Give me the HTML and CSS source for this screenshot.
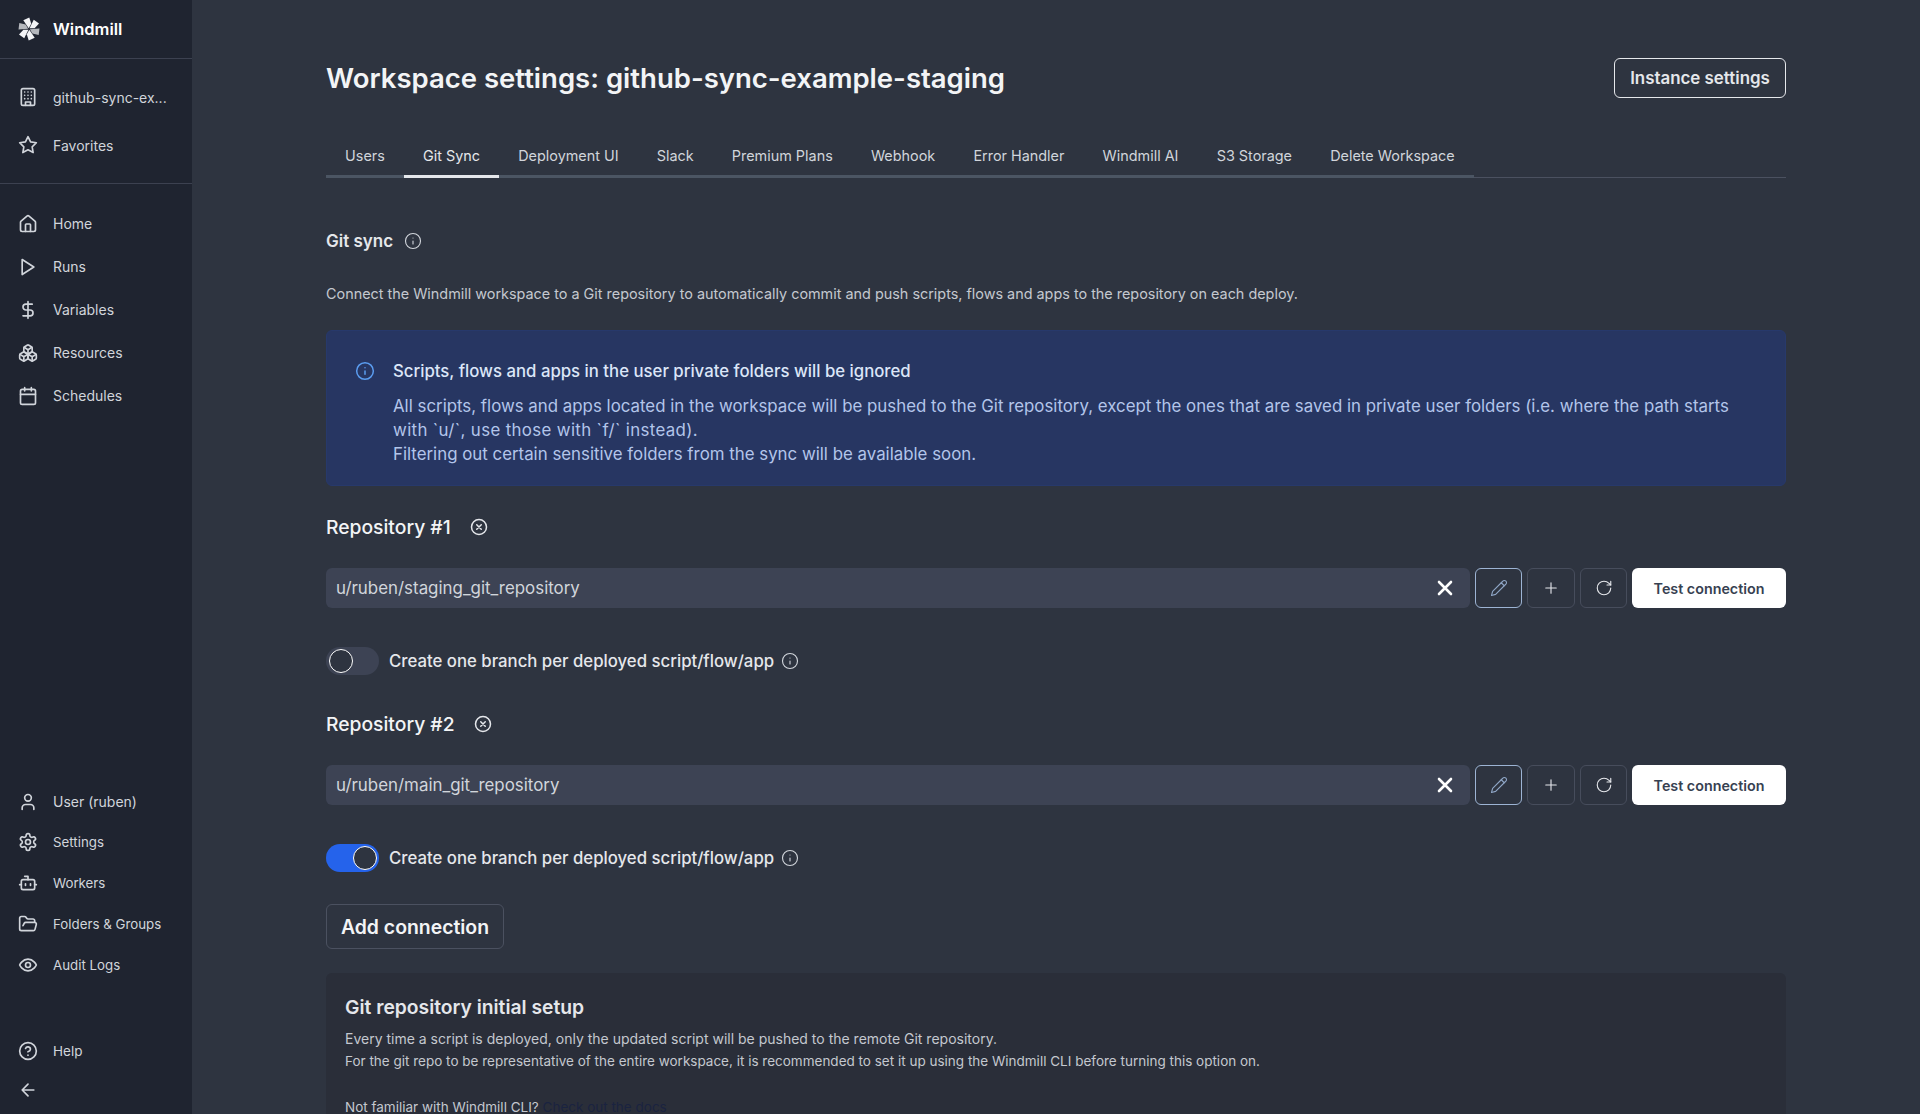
FILE: index.html
```html
<!DOCTYPE html>
<html lang="en">
  <head>
    <meta charset="UTF-8" />
    <meta name="viewport" content="width=device-width, initial-scale=1.0" />
    <title>Workspace settings</title>
    <link rel="stylesheet" href="styles.css">
  </head>
  <body>
    <svg class="sprites" width="0" height="0">
      <symbol id="i-blade" viewBox="0 0 24 24"><path d="M11.700 11.200 6.300 3.200 12.300.6 14.200 6.800z"/></symbol>
      <symbol id="i-building" viewBox="0 0 24 24"><rect x="4" y="2" width="16" height="20" rx="2"/><path d="M9 22v-4h6v4M8 6h.01M16 6h.01M12 6h.01M12 10h.01M12 14h.01M16 10h.01M16 14h.01M8 10h.01M8 14h.01"/></symbol>
      <symbol id="i-star" viewBox="0 0 24 24"><polygon points="12 2 15.09 8.26 22 9.27 17 14.14 18.18 21.02 12 17.77 5.82 21.02 7 14.14 2 9.27 8.91 8.26 12 2"/></symbol>
      <symbol id="i-home" viewBox="0 0 24 24"><path d="M15 21v-8a1 1 0 0 0-1-1h-4a1 1 0 0 0-1 1v8"/><path d="M3 10a2 2 0 0 1 .709-1.528l7-5.999a2 2 0 0 1 2.582 0l7 5.999A2 2 0 0 1 21 10v9a2 2 0 0 1-2 2H5a2 2 0 0 1-2-2z"/></symbol>
      <symbol id="i-play" viewBox="0 0 24 24"><polygon points="5 3 19 12 5 21 5 3"/></symbol>
      <symbol id="i-dollar" viewBox="0 0 24 24"><path d="M12 2v20M17 5H9.500a3.500 3.500 0 0 0 0 7h5a3.500 3.500 0 0 1 0 7H6"/></symbol>
      <symbol id="i-boxes" viewBox="0 0 24 24"><path d="M2.970 12.920A2 2 0 0 0 2 14.630v3.240a2 2 0 0 0 .97 1.710l3 1.800a2 2 0 0 0 2.060 0L12 19v-5.500l-5-3-4.030 2.420Z"/><path d="m7 16.500-4.740-2.850M7 16.500l5-3M7 16.500v5.170"/><path d="M12 13.500V19l3.970 2.380a2 2 0 0 0 2.060 0l3-1.800a2 2 0 0 0 .97-1.710v-3.240a2 2 0 0 0-.97-1.710L17 10.500l-5 3Z"/><path d="m17 16.500-5-3M17 16.500l4.740-2.850M17 16.500v5.170"/><path d="M7.970 4.420A2 2 0 0 0 7 6.130v4.370l5 3 5-3V6.130a2 2 0 0 0-.97-1.710l-3-1.800a2 2 0 0 0-2.060 0l-3 1.800Z"/><path d="M12 8 7.260 5.150M12 8l4.740-2.850M12 13.500V8"/></symbol>
      <symbol id="i-calendar" viewBox="0 0 24 24"><rect x="3" y="4" width="18" height="18" rx="2"/><path d="M16 2v4M8 2v4M3 10h18"/></symbol>
      <symbol id="i-user" viewBox="0 0 24 24"><path d="M19 21v-2a4 4 0 0 0-4-4H9a4 4 0 0 0-4 4v2"/><circle cx="12" cy="7" r="4"/></symbol>
      <symbol id="i-settings" viewBox="0 0 24 24"><path d="M12.220 2h-.44a2 2 0 0 0-2 2v.18a2 2 0 0 1-1 1.730l-.43.25a2 2 0 0 1-2 0l-.15-.08a2 2 0 0 0-2.730.73l-.22.38a2 2 0 0 0 .73 2.730l.15.1a2 2 0 0 1 1 1.720v.51a2 2 0 0 1-1 1.740l-.15.09a2 2 0 0 0-.73 2.730l.22.38a2 2 0 0 0 2.730.73l.15-.08a2 2 0 0 1 2 0l.43.25a2 2 0 0 1 1 1.730V20a2 2 0 0 0 2 2h.44a2 2 0 0 0 2-2v-.18a2 2 0 0 1 1-1.730l.43-.25a2 2 0 0 1 2 0l.15.08a2 2 0 0 0 2.730-.73l.22-.39a2 2 0 0 0-.73-2.730l-.15-.08a2 2 0 0 1-1-1.740v-.5a2 2 0 0 1 1-1.740l.15-.09a2 2 0 0 0 .73-2.730l-.22-.38a2 2 0 0 0-2.730-.73l-.15.08a2 2 0 0 1-2 0l-.43-.25a2 2 0 0 1-1-1.730V4a2 2 0 0 0-2-2z"/><circle cx="12" cy="12" r="3"/></symbol>
      <symbol id="i-bot" viewBox="0 0 24 24"><path d="M12 8V4H8"/><rect x="4" y="8" width="16" height="12" rx="2"/><path d="M2 14h2M20 14h2M15 13v2M9 13v2"/></symbol>
      <symbol id="i-folder" viewBox="0 0 24 24"><path d="m6 14 1.500-2.900A2 2 0 0 1 9.240 10H20a2 2 0 0 1 1.940 2.500l-1.540 6a2 2 0 0 1-1.950 1.500H4a2 2 0 0 1-2-2V5a2 2 0 0 1 2-2h3.900a2 2 0 0 1 1.690.9l.81 1.200a2 2 0 0 0 1.670.9H18a2 2 0 0 1 2 2v2"/></symbol>
      <symbol id="i-eye" viewBox="0 0 24 24"><path d="M2 12s3-7 10-7 10 7 10 7-3 7-10 7-10-7-10-7Z"/><circle cx="12" cy="12" r="3"/></symbol>
      <symbol id="i-help" viewBox="0 0 24 24"><circle cx="12" cy="12" r="10"/><path d="M9.090 9a3 3 0 0 1 5.830 1c0 2-3 3-3 3M12 17h.01"/></symbol>
      <symbol id="i-back" viewBox="0 0 24 24"><path d="m12 19-7-7 7-7M19 12H5"/></symbol>
      <symbol id="i-info" viewBox="0 0 24 24"><circle cx="12" cy="12" r="10"/><path d="M12 16v-4M12 8h.01"/></symbol>
      <symbol id="i-xcircle" viewBox="0 0 24 24"><circle cx="12" cy="12" r="10"/><path d="m15 9-6 6M9 9l6 6"/></symbol>
      <symbol id="i-x" viewBox="0 0 24 24"><path d="M18 6 6 18M6 6l12 12"/></symbol>
      <symbol id="i-pen" viewBox="0 0 24 24"><path d="M17 3a2.850 2.830 0 1 1 4 4L7.500 20.500 2 22l1.500-5.500Z"/><path d="m15 5 4 4"/></symbol>
      <symbol id="i-plus" viewBox="0 0 24 24"><path d="M5 12h14M12 5v14"/></symbol>
      <symbol id="i-refresh" viewBox="0 0 24 24"><path d="M21 12a9 9 0 1 1-9-9c2.520 0 4.930 1 6.740 2.740L21 8"/><path d="M21 3v5h-5"/></symbol>
    </svg>

    <aside class="sidebar">
      <div class="brand">
        <svg class="logo" viewBox="0 0 24 24">
          <use class="blade-light" href="#i-blade" width="24" height="24"/>
          <use class="blade-light" href="#i-blade" width="24" height="24" transform="rotate(60 12 12)"/>
          <use class="blade-grey" href="#i-blade" width="24" height="24" transform="rotate(120 12 12)"/>
          <use class="blade-light" href="#i-blade" width="24" height="24" transform="rotate(180 12 12)"/>
          <use class="blade-light" href="#i-blade" width="24" height="24" transform="rotate(240 12 12)"/>
          <use class="blade-grey" href="#i-blade" width="24" height="24" transform="rotate(300 12 12)"/>
        </svg>
        <span>Windmill</span>
      </div>
      <nav class="nav-top">
        <a class="nav-item workspace"><svg><use href="#i-building"/></svg><span>github-sync-ex...</span></a>
        <a class="nav-item favorites"><svg><use href="#i-star"/></svg><span>Favorites</span></a>
      </nav>
      <nav class="nav-main">
        <a class="nav-item"><svg><use href="#i-home"/></svg><span>Home</span></a>
        <a class="nav-item"><svg><use href="#i-play"/></svg><span>Runs</span></a>
        <a class="nav-item"><svg><use href="#i-dollar"/></svg><span>Variables</span></a>
        <a class="nav-item"><svg><use href="#i-boxes"/></svg><span>Resources</span></a>
        <a class="nav-item"><svg><use href="#i-calendar"/></svg><span>Schedules</span></a>
      </nav>
      <nav class="nav-bottom">
        <a class="nav-item nav-user"><svg><use href="#i-user"/></svg><span>User (ruben)</span></a>
        <a class="nav-item"><svg><use href="#i-settings"/></svg><span>Settings</span></a>
        <a class="nav-item"><svg><use href="#i-bot"/></svg><span>Workers</span></a>
        <a class="nav-item"><svg><use href="#i-folder"/></svg><span>Folders &amp; Groups</span></a>
        <a class="nav-item"><svg><use href="#i-eye"/></svg><span>Audit Logs</span></a>
      </nav>
      <nav class="nav-help">
        <a class="nav-item"><svg><use href="#i-help"/></svg><span>Help</span></a>
        <a class="nav-item back"><svg><use href="#i-back"/></svg></a>
      </nav>
    </aside>

    <main class="content">
      <header class="page-head">
        <h1>Workspace settings: github-sync-example-staging</h1>
        <button type="button" class="btn-outline">Instance settings</button>
      </header>

      <div class="tabs">
        <span class="tab">Users</span>
        <span class="tab active">Git Sync</span>
        <span class="tab">Deployment UI</span>
        <span class="tab">Slack</span>
        <span class="tab">Premium Plans</span>
        <span class="tab">Webhook</span>
        <span class="tab">Error Handler</span>
        <span class="tab">Windmill AI</span>
        <span class="tab">S3 Storage</span>
        <span class="tab">Delete Workspace</span>
      </div>

      <div class="section-title">
        <h2>Git sync</h2>
        <svg class="icon-info"><use href="#i-info"/></svg>
      </div>
      <p class="desc">Connect the Windmill workspace to a Git repository to automatically commit and push scripts, flows and apps to the repository on each deploy.</p>

      <div class="alert">
        <svg class="alert-icon"><use href="#i-info"/></svg>
        <div>
          <h3>Scripts, flows and apps in the user private folders will be ignored</h3>
          <div class="alert-body">
            <p>All scripts, flows and apps located in the workspace will be pushed to the Git repository, except the ones that are saved in private user folders (i.e. where the path starts</p>
            <p class="wide">with `u/`, use those with `f/` instead).</p>
            <p>Filtering out certain sensitive folders from the sync will be available soon.</p>
          </div>
        </div>
      </div>

      <section class="repo">
        <div class="repo-title">
          <h3>Repository #1</h3>
          <svg><use href="#i-xcircle"/></svg>
        </div>
        <div class="repo-row">
          <div class="path-input">
            <span>u/ruben/staging_git_repository</span>
            <svg><use href="#i-x"/></svg>
          </div>
          <button type="button" class="btn-icon edit"><svg><use href="#i-pen"/></svg></button>
          <button type="button" class="btn-icon add"><svg><use href="#i-plus"/></svg></button>
          <button type="button" class="btn-icon"><svg><use href="#i-refresh"/></svg></button>
          <button type="button" class="btn-test">Test connection</button>
        </div>
        <div class="toggle-row">
          <span class="toggle"><span class="knob"></span></span>
          <span>Create one branch per deployed script/flow/app</span>
          <svg class="icon-info"><use href="#i-info"/></svg>
        </div>
      </section>

      <section class="repo">
        <div class="repo-title">
          <h3>Repository #2</h3>
          <svg><use href="#i-xcircle"/></svg>
        </div>
        <div class="repo-row">
          <div class="path-input">
            <span>u/ruben/main_git_repository</span>
            <svg><use href="#i-x"/></svg>
          </div>
          <button type="button" class="btn-icon edit"><svg><use href="#i-pen"/></svg></button>
          <button type="button" class="btn-icon add"><svg><use href="#i-plus"/></svg></button>
          <button type="button" class="btn-icon"><svg><use href="#i-refresh"/></svg></button>
          <button type="button" class="btn-test">Test connection</button>
        </div>
        <div class="toggle-row">
          <span class="toggle on"><span class="knob"></span></span>
          <span>Create one branch per deployed script/flow/app</span>
          <svg class="icon-info"><use href="#i-info"/></svg>
        </div>
      </section>

      <button type="button" class="btn-add">Add connection</button>

      <div class="setup">
        <h3>Git repository initial setup</h3>
        <p>Every time a script is deployed, only the updated script will be pushed to the remote Git repository.</p>
        <p class="setup-small">For the git repo to be representative of the entire workspace, it is recommended to set it up using the Windmill CLI before turning this option on.</p>
        <p class="setup-small setup-docs">Not familiar with Windmill CLI? <a>Check out the docs</a></p>
      </div>
    </main>
  </body>
</html>
```

FILE: styles.css
```css
* {
  box-sizing: border-box;
}

html,
body {
  height: 100%;
  margin: 0;
}

body {
  display: flex;
  overflow: hidden;
  background-color: #2e3440;
  color: #f3f4f6;
  font-family: Inter, "Liberation Sans", sans-serif;
}

.sprites {
  position: absolute;
}

svg {
  fill: none;
  stroke: currentColor;
  stroke-width: 2;
  stroke-linecap: round;
  stroke-linejoin: round;
}

/* sidebar */
.sidebar {
  width: 192px;
  height: 100%;
  flex: none;
  display: flex;
  flex-direction: column;
  background-color: #1f2430;
  color: #d1d5db;
  font-size: 14px;
}

.brand {
  height: 59px;
  display: flex;
  align-items: center;
  gap: 12px;
  padding-left: 17px;
  border-bottom: 1px solid #3c4150;
  color: #ffffff;
  font-size: 16.500px;
  font-weight: 600;
}

.logo {
  width: 24px;
  height: 24px;
  stroke: none;
}

.blade-light {
  fill: #f3f4f6;
}

.blade-grey {
  fill: #b5b8bd;
}

.nav-top {
  height: 125px;
  padding-top: 14px;
  border-bottom: 1px solid #3c4150;
}

.nav-item {
  display: flex;
  align-items: center;
  gap: 15px;
  height: 43px;
  padding-left: 18px;
}

.nav-item svg {
  width: 20px;
  height: 20px;
  flex: none;
}

.workspace {
  height: 48px;
}

.favorites {
  height: 48px;
}

.nav-main {
  padding-top: 18px;
}

.nav-bottom {
  margin-top: auto;
  font-size: 13.300px;
}

.nav-bottom .nav-item {
  height: 41px;
}

.nav-bottom .nav-user {
  height: 39px;
  font-size: 14px;
}

.nav-help {
  padding-top: 46px;
  padding-bottom: 5px;
  font-size: 13.500px;
}

.nav-help .nav-item {
  height: 39px;
}

/* main */
.content {
  flex: 1;
  min-width: 0;
  height: 100%;
  overflow: hidden;
  padding: 58px 134px 0;
}

.page-head {
  display: flex;
  align-items: center;
  justify-content: space-between;
  height: 40px;
}

h1,
h2,
h3,
p {
  margin: 0;
}

h1 {
  font-size: 27.500px;
  font-weight: 600;
  color: #f3f4f6;
}

.btn-outline {
  width: 172px;
  height: 40px;
  background: transparent;
  border: 1px solid #e5e7eb;
  border-radius: 6px;
  color: #e5e7eb;
  font: 600 16.900px Inter, sans-serif;
}

.tabs {
  display: flex;
  margin-top: 34px;
  height: 46px;
  border-bottom: 1px solid #4b5160;
}

.tab {
  height: 46px;
  padding: 4px 19.100px 0;
  display: flex;
  align-items: center;
  font-size: 14.400px;
  color: #d1d5db;
  border-bottom: 3px solid #4b5563;
}

.tab.active {
  color: #e5e7eb;
  border-bottom-color: #e5e7eb;
}

.section-title {
  display: flex;
  align-items: center;
  gap: 11px;
  margin-top: 51px;
  height: 24px;
}

h2 {
  font-size: 17px;
  font-weight: 600;
  color: #e5e7eb;
}

.icon-info {
  width: 18px;
  height: 18px;
  stroke-width: 1.500;
  color: #d1d5db;
}

.desc {
  margin-top: 31px;
  font-size: 14.400px;
  line-height: 20px;
  color: #c4c8cf;
}

.alert {
  display: flex;
  gap: 18px;
  height: 156px;
  margin-top: 26px;
  padding: 28px;
  border: 1px solid #27396b;
  border-radius: 6px;
  background-color: #273662;
  color: #b3c5ea;
}

.alert-icon {
  width: 20px;
  height: 20px;
  flex: none;
  margin-top: 2px;
  stroke-width: 1.800;
  color: #5b9df0;
}

.alert h3 {
  font-size: 16.750px;
  line-height: 24px;
  font-weight: 500;
  color: #dce6f8;
}

.alert-body {
  margin-top: 11px;
  font-size: 16.850px;
  line-height: 24px;
}

.alert-body .wide {
  letter-spacing: 0.350px;
}

.repo {
  margin-top: 25px;
}

.repo + .repo {
  margin-top: 33px;
}

.repo-title {
  display: flex;
  align-items: center;
  gap: 19.500px;
  height: 32px;
}

.repo-title h3 {
  font-size: 19.300px;
  font-weight: 500;
  color: #f3f4f6;
}

.repo-title svg {
  width: 18px;
  height: 18px;
  color: #e5e7eb;
}

.repo-row {
  display: flex;
  gap: 5px;
  height: 40px;
  margin-top: 25px;
}

.path-input {
  flex: 1;
  display: flex;
  align-items: center;
  justify-content: space-between;
  padding: 0 13px 0 10px;
  border-radius: 6px;
  background-color: #3d4354;
  color: #d1d5db;
  font-size: 16.900px;
}

.path-input svg {
  width: 24px;
  height: 24px;
  stroke-width: 2.600;
  color: #ffffff;
}

.btn-icon {
  width: 47px;
  height: 40px;
  display: flex;
  align-items: center;
  justify-content: center;
  padding: 0;
  background: transparent;
  border: 1px solid #474d5c;
  border-radius: 6px;
  color: #e5e7eb;
}

.btn-icon.add {
  width: 48px;
}

.btn-icon svg {
  width: 18px;
  height: 18px;
  stroke-width: 1.500;
}

.btn-icon.edit {
  border-color: #9db4d4;
  color: #8fa6c6;
}

.btn-test {
  width: 154px;
  height: 40px;
  border: none;
  border-radius: 6px;
  background-color: #ffffff;
  color: #374151;
  font: 600 14.300px Inter, sans-serif;
}

.toggle-row {
  display: flex;
  align-items: center;
  height: 28px;
  margin-top: 39px;
  color: #e5e7eb;
  font-size: 16.750px;
  font-weight: 500;
}

.toggle-row .icon-info {
  margin-left: 7px;
}

.toggle {
  width: 53px;
  height: 28px;
  margin-right: 10px;
  padding: 2px 3px;
  border-radius: 14px;
  background-color: #3d4354;
  display: flex;
}

.toggle.on {
  justify-content: flex-end;
  padding-right: 2px;
  background-color: #2563eb;
}

.knob {
  width: 24px;
  height: 24px;
  border: 1px solid #ffffff;
  border-radius: 50%;
  background-color: #2e3440;
}

.btn-add {
  display: block;
  width: 178px;
  height: 45px;
  margin-top: 32px;
  background: transparent;
  border: 1px solid #4b5160;
  border-radius: 6px;
  color: #f3f4f6;
  font: 600 19.400px Inter, sans-serif;
}

.setup {
  margin-top: 24px;
  padding: 20px 19px;
  height: 300px;
  border-radius: 6px;
  background-color: #2a2e39;
  color: #c4c8cf;
  font-size: 14px;
  line-height: 23px;
}

.setup h3 {
  margin-bottom: 6px;
  font-size: 19.300px;
  line-height: 28px;
  font-weight: 600;
  color: #e5e7eb;
}

.setup-small {
  font-size: 13.500px;
}

.setup-docs {
  margin-top: 23px;
}

.setup-docs a {
  color: #1a2340;
}
```
